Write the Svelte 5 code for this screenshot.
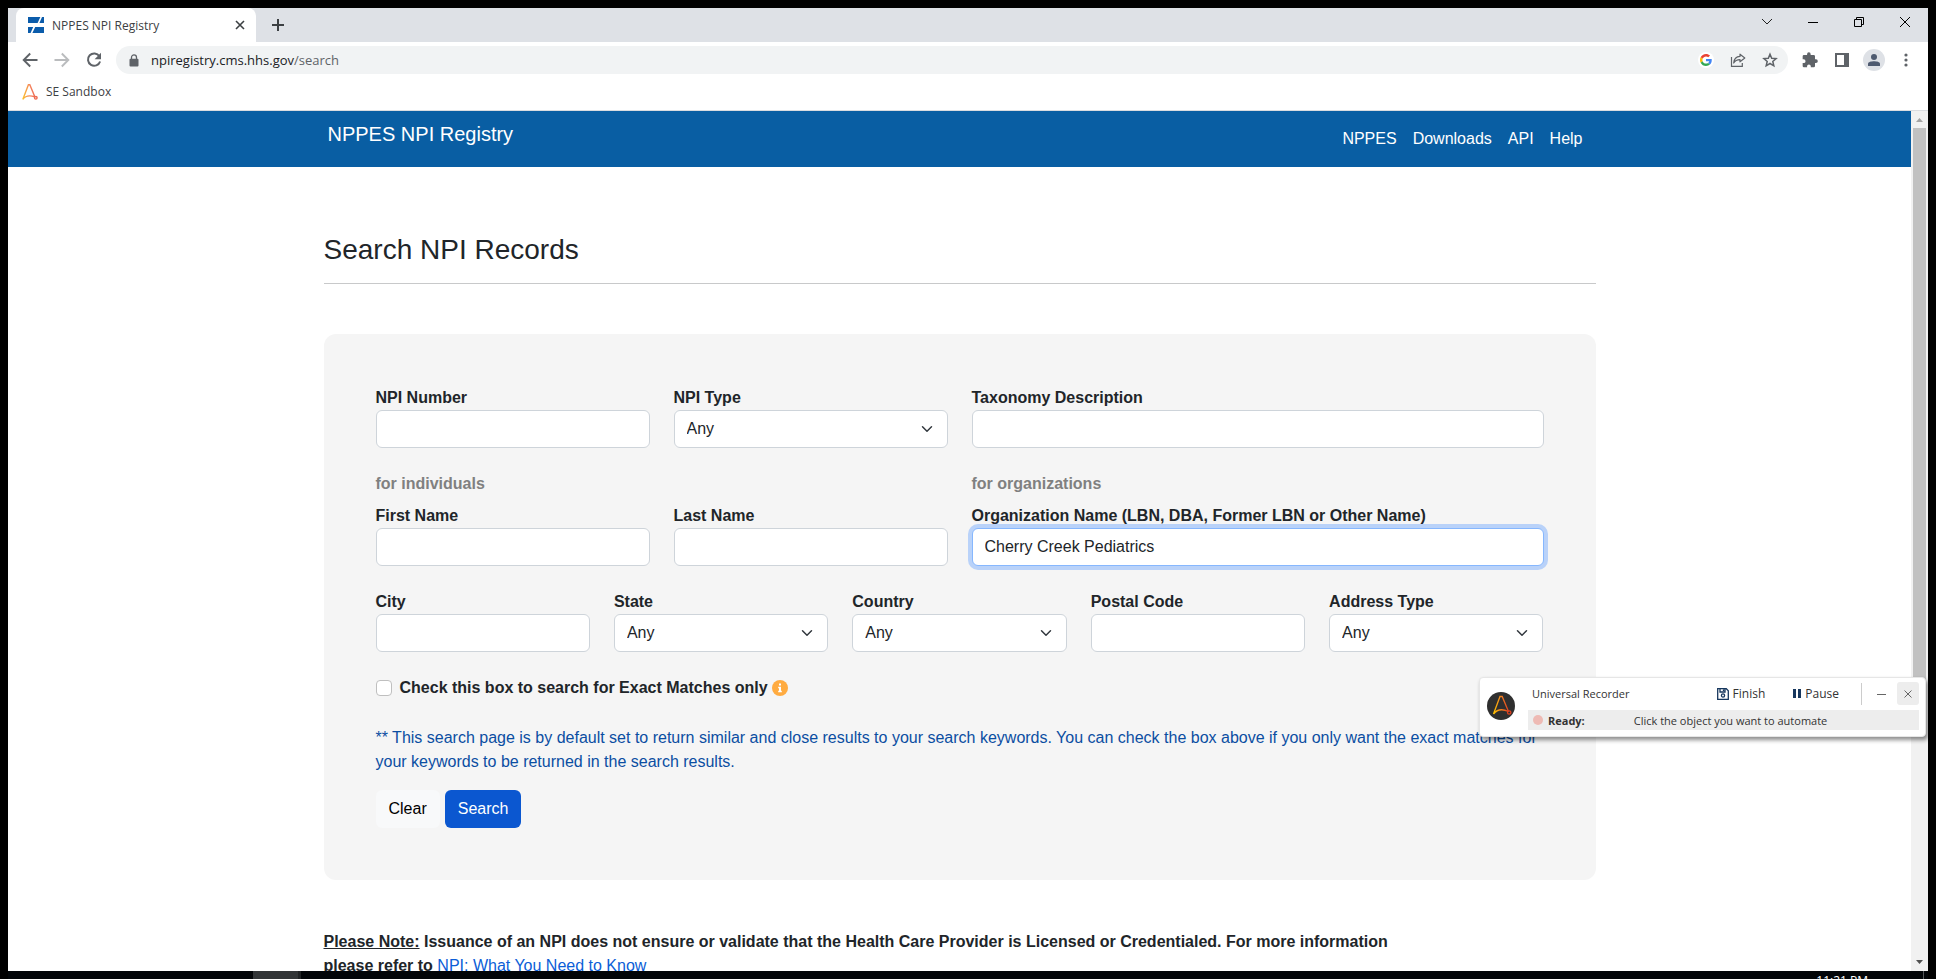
<script lang="ts">
  let organization = $state('Cherry Creek Pediatrics');
  let exact = $state(false);
</script>

{#snippet field(id: string, label: string, span: string)}
  <div class="field {span}">
    <label for={id}>{label}</label>
    <input {id} class="control" type="text" />
  </div>
{/snippet}

{#snippet picker(id: string, label: string, span: string)}
  <div class="field {span}">
    <label for={id}>{label}</label>
    <select {id} class="control">
      <option>Any</option>
    </select>
  </div>
{/snippet}

<div class="desktop">
  <div class="window">
    <div class="tabstrip">
      <div class="tab">
        <svg width="16" height="16" viewBox="0 0 16 16">
          <path fill="#0b5cab" d="M0 0h12.400L9.600 6H0zM14 0h2v6h-4.600zM0 10h5.200L2.600 16H0zM7.200 10H16v6H4.400z" />
        </svg>
        <span class="tab-title">NPPES NPI Registry</span>
        <button class="icon" aria-label="Close tab">
          <svg width="10" height="10" viewBox="0 0 10 10"><path d="M1 1l8 8M9 1l-8 8" stroke="#3c4043" stroke-width="1.600" /></svg>
        </button>
      </div>
      <button class="icon new-tab" aria-label="New tab">
        <svg width="12" height="12" viewBox="0 0 12 12"><path d="M6 0v12M0 6h12" stroke="#3c4043" stroke-width="2" /></svg>
      </button>
      <div class="window-buttons">
        <button class="icon" aria-label="Search tabs">
          <svg width="12" height="8" viewBox="0 0 12 8"><path d="M1 1l5 5 5-5" fill="none" stroke="#222" /></svg>
        </button>
        <button class="icon" aria-label="Minimize">
          <svg width="10" height="10" viewBox="0 0 10 10"><path d="M0 5.500h10" stroke="#000" /></svg>
        </button>
        <button class="icon" aria-label="Restore">
          <svg width="10" height="10" viewBox="0 0 10 10"><path d="M.5 2.500h7v7h-7zM2.500 2.500v-2h7v7h-2" fill="none" stroke="#000" /></svg>
        </button>
        <button class="icon" aria-label="Close window">
          <svg width="10" height="10" viewBox="0 0 10 10"><path d="M0 0l10 10M10 0L0 10" stroke="#000" /></svg>
        </button>
      </div>
    </div>

    <div class="toolbar">
      <button class="icon" aria-label="Back">
        <svg width="16" height="16" viewBox="0 0 16 16"><path d="M15.500 8H2M8.200 1.500L1.700 8l6.500 6.500" fill="none" stroke="#5f6368" stroke-width="1.900" /></svg>
      </button>
      <button class="icon" aria-label="Forward">
        <svg width="16" height="16" viewBox="0 0 16 16"><path d="M.5 8H14M7.800 1.500L14.300 8l-6.500 6.500" fill="none" stroke="#babcbe" stroke-width="1.900" /></svg>
      </button>
      <button class="icon" aria-label="Reload">
        <svg width="16" height="16" viewBox="0 0 16 16">
          <path d="M13.400 4.200A6.200 6.200 0 1 0 14.100 9.500" fill="none" stroke="#5f6368" stroke-width="2" />
          <path d="M15 .8v6.400H8.600z" fill="#5f6368" />
        </svg>
      </button>
      <div class="omnibox">
        <svg width="10" height="13" viewBox="0 0 10 13">
          <path d="M2.500 5.500V3.400a2.500 2.500 0 0 1 5 0v2.100" fill="none" stroke="#5f6368" stroke-width="1.300" />
          <rect x="0.500" y="4.700" width="9" height="7.800" rx="1" fill="#5f6368" />
        </svg>
        <span class="url">npiregistry.cms.hhs.gov<span class="path">/search</span></span>
        <button class="icon google" aria-label="Google">
          <svg width="12" height="12" viewBox="0 0 48 48">
            <path fill="#ea4335" d="M24 9.500c3.540 0 6.710 1.220 9.210 3.600l6.850-6.850C35.900 2.380 30.470 0 24 0 14.620 0 6.510 5.380 2.560 13.220l7.980 6.190C12.430 13.720 17.740 9.500 24 9.500z" />
            <path fill="#4285f4" d="M46.980 24.550c0-1.570-.15-3.090-.38-4.550H24v9.020h12.940c-.58 2.960-2.260 5.480-4.780 7.180l7.730 6c4.510-4.180 7.090-10.360 7.090-17.650z" />
            <path fill="#fbbc05" d="M10.530 28.590c-.48-1.450-.76-2.990-.76-4.590s.27-3.140.76-4.590l-7.980-6.190C.92 16.460 0 20.120 0 24c0 3.880.92 7.540 2.560 10.780l7.970-6.190z" />
            <path fill="#34a853" d="M24 48c6.480 0 11.930-2.130 15.890-5.810l-7.730-6c-2.150 1.450-4.920 2.300-8.160 2.300-6.260 0-11.570-4.220-13.470-9.910l-7.980 6.190C6.510 42.620 14.620 48 24 48z" />
          </svg>
        </button>
        <button class="icon" aria-label="Share">
          <svg width="16" height="16" viewBox="0 0 16 16" fill="none" stroke="#5f6368" stroke-width="1.200">
            <path d="M1.500 5v9.400h10.800V11" />
            <path d="M10 2.200L14.800 6 10 9.800V7.600C7 7.600 5 8.600 3.700 11 4 7.200 6.500 4.600 10 4.400z" stroke-linejoin="round" />
          </svg>
        </button>
        <button class="icon" aria-label="Bookmark">
          <svg width="16" height="16" viewBox="0 0 16 16"><path d="M8 2.200l1.700 4 4.400.4-3.300 2.900 1 4.300L8 11.500l-3.800 2.300 1-4.300-3.300-2.900 4.400-.4z" fill="none" stroke="#5f6368" stroke-width="1.500" /></svg>
        </button>
      </div>
      <button class="icon" aria-label="Extensions">
        <svg width="16" height="16" viewBox="0 0 24 24"><path fill="#5f6368" d="M21 11h-1.500V6.500a2 2 0 0 0-2-2H13V3.200a2.700 2.700 0 0 0-5.400 0v1.300H3a2 2 0 0 0-2 2V11h1.500a2.800 2.800 0 0 1 0 5.600H1V21a2 2 0 0 0 2 2h4.600v-1.500a2.800 2.800 0 0 1 5.600 0V23h4.300a2 2 0 0 0 2-2v-4.600H21A2.700 2.700 0 0 0 21 11z" /></svg>
      </button>
      <button class="icon" aria-label="Side panel">
        <svg width="14" height="14" viewBox="0 0 14 14"><path fill="#5f6368" fill-rule="evenodd" d="M0 0h14v14H0zM2 2h7v10H2z" /></svg>
      </button>
      <button class="icon profile" aria-label="Profile">
        <svg width="12" height="12" viewBox="0 0 12 12" fill="#4e5a70"><circle cx="6" cy="3" r="3" /><path d="M0 12V9.800C0 8 3.500 7.300 6 7.300S12 8 12 9.800V12z" /></svg>
      </button>
      <button class="icon" aria-label="Menu">
        <svg width="4" height="14" viewBox="0 0 4 14" fill="#5f6368"><circle cx="2" cy="2" r="1.600" /><circle cx="2" cy="7" r="1.600" /><circle cx="2" cy="12" r="1.600" /></svg>
      </button>
    </div>

    <div class="bookmarks">
      <svg width="16" height="16" viewBox="0 0 16 16" fill="none" stroke-width="1.400">
        <defs>
          <linearGradient id="flame" x1="0" x2="1"><stop offset="0" stop-color="#fbc02d" /><stop offset="0.600" stop-color="#f4845f" /><stop offset="1" stop-color="#ee6a50" /></linearGradient>
        </defs>
        <path stroke="url(#flame)" d="M.8 15.400L6.400.8h1.400l5 12M.8 15.400c2.500-3.600 6-4.600 12-2.600" />
        <circle cx="13.800" cy="13.800" r="1.300" stroke="#ee6a50" />
      </svg>
      <a href="#sandbox">SE Sandbox</a>
    </div>

    <div class="viewport">
      <div class="page">
        <header>
          <div class="container nav">
            <a class="brand" href="#home">NPPES NPI Registry</a>
            <nav>
              <a href="#nppes">NPPES</a>
              <a href="#downloads">Downloads</a>
              <a href="#api">API</a>
              <a href="#help">Help</a>
            </nav>
          </div>
        </header>

        <main class="container">
          <h1>Search NPI Records</h1>

          <form class="card">
            <div class="grid quarters">
              {@render field('number', 'NPI Number', '')}
              {@render picker('type', 'NPI Type', '')}
              {@render field('taxonomy', 'Taxonomy Description', 'wide')}
            </div>

            <div class="grid quarters">
              <p class="group wide">for individuals</p>
              <p class="group wide">for organizations</p>
              {@render field('first', 'First Name', '')}
              {@render field('last', 'Last Name', '')}
              <div class="field wide">
                <label for="organization">Organization Name (LBN, DBA, Former LBN or Other Name)</label>
                <input id="organization" class="control active" type="text" bind:value={organization} />
              </div>
            </div>

            <div class="grid fifths">
              {@render field('city', 'City', '')}
              {@render picker('state', 'State', '')}
              {@render picker('country', 'Country', '')}
              {@render field('postal', 'Postal Code', '')}
              {@render picker('address', 'Address Type', '')}
            </div>

            <div class="exact">
              <input id="exact" type="checkbox" bind:checked={exact} />
              <label for="exact">Check this box to search for Exact Matches only</label>
              <svg width="16" height="16" viewBox="0 0 16 16">
                <circle cx="8" cy="8" r="8" fill="#ffab40" />
                <path fill="#fff" d="M7 3.500h2v2H7zM6.200 6.800H9v4h.8v1.500H6.200v-1.500H7V8.200h-.8z" />
              </svg>
            </div>

            <p class="hint">** This search page is by default set to return similar and close results to your search keywords. You can check the box above if you only want the exact matches for your keywords to be returned in the search results.</p>

            <div class="actions">
              <button type="reset" class="btn clear">Clear</button>
              <button type="button" class="btn search">Search</button>
            </div>
          </form>

          <p class="note"><u>Please Note:</u> Issuance of an NPI does not ensure or validate that the Health Care Provider is Licensed or Credentialed. For more information please refer to <a href="#know">NPI: What You Need to Know</a></p>
        </main>
      </div>

      <div class="scrollbar">
        <svg width="17" height="17" viewBox="0 0 17 17"><path d="M5 11l3.500-4 3.500 4z" fill="#a3a3a3" /></svg>
        <div class="thumb"></div>
        <svg width="17" height="17" viewBox="0 0 17 17"><path d="M5 6l3.500 4L12 6z" fill="#505050" /></svg>
      </div>
    </div>
  </div>

  <div class="taskbar">
    <span class="task"></span>
    <span class="clock">11:21 PM</span>
    <span class="peek"></span>
  </div>

  <section class="recorder">
    <svg class="logo" width="28" height="28" viewBox="0 0 28 28" fill="none" stroke-width="1.300">
      <defs>
        <linearGradient id="ember" x1="0" x2="1"><stop offset="0" stop-color="#ffc400" /><stop offset="0.500" stop-color="#f58220" /><stop offset="1" stop-color="#e0401f" /></linearGradient>
      </defs>
      <circle cx="14" cy="14" r="14" fill="#2f2f2f" />
      <path stroke="url(#ember)" d="M6.500 22L13 4.500h2.200l6.300 15M6.500 22c3.500-4.500 8.500-5.500 15-2.500" />
      <circle cx="22.200" cy="20.500" r="1.700" stroke="#e0401f" />
    </svg>
    <div class="recorder-body">
      <div class="recorder-top">
        <span class="recorder-title">Universal Recorder</span>
        <button class="text-button">
          <svg width="12" height="12" viewBox="0 0 12 12" fill="none" stroke="#17375e" stroke-width="1.300"><path d="M.7.7h8.600l2 2v8.600H.7zM3 .7v3.300h5V.7M6.500 1.500v1.600" /><circle cx="6" cy="7.500" r="1.600" /></svg>
          Finish
        </button>
        <button class="text-button">
          <svg width="8" height="9" viewBox="0 0 8 9"><path d="M0 0h3v9H0zM5 0h3v9H5z" fill="#17375e" /></svg>
          Pause
        </button>
        <span class="divider"></span>
        <button class="icon mini" aria-label="Minimize recorder">
          <svg width="10" height="10" viewBox="0 0 10 10"><path d="M1 5.500h9" stroke="#666" /></svg>
        </button>
        <button class="icon mini shaded" aria-label="Close recorder">
          <svg width="8" height="8" viewBox="0 0 8 8"><path d="M.5.5l7 7M7.500.5l-7 7" stroke="#666" /></svg>
        </button>
      </div>
      <div class="status">
        <span class="dot"></span>
        <strong>Ready:</strong>
        <span class="message">Click the object you want to automate</span>
      </div>
    </div>
  </section>
</div>

<style>
  :global(body) {
    margin: 0;
    background: #000;
  }
  * {
    box-sizing: border-box;
  }
  svg {
    display: block;
    flex: none;
  }
  p,
  h1 {
    margin: 0;
  }
  a {
    text-decoration: none;
  }
  .desktop {
    height: 100vh;
    padding: 8px 8px 0;
    display: flex;
    flex-direction: column;
    background: #000;
    overflow: hidden;
    font-family: 'Open Sans', sans-serif;
    font-size: 12px;
    color: #3c4043;
  }
  .window {
    flex: 1;
    min-height: 0;
    display: flex;
    flex-direction: column;
    background: #fff;
  }
  .icon {
    border: 0;
    padding: 0;
    background: none;
    display: flex;
    align-items: center;
    justify-content: center;
    width: 16px;
    height: 24px;
  }

  /* Browser chrome */
  .tabstrip {
    flex: none;
    height: 34px;
    display: flex;
    align-items: center;
    background: #dee1e6;
    padding-left: 8px;
  }
  .tab {
    width: 240px;
    height: 34px;
    display: flex;
    align-items: center;
    gap: 8px;
    padding: 0 8px 0 12px;
    background: #fff;
    border-radius: 8px 8px 0 0;
  }
  .tab-title {
    flex: 1;
  }
  .new-tab {
    margin-left: 14px;
  }
  .window-buttons {
    margin-left: auto;
    display: flex;
    align-items: center;
    gap: 30px;
    padding: 0 15px 6px 0;
  }
  .toolbar {
    flex: none;
    height: 36px;
    display: flex;
    align-items: center;
    gap: 16px;
    padding: 0 14px;
  }
  .omnibox {
    flex: 1;
    height: 28px;
    margin: 0 -2px;
    display: flex;
    align-items: center;
    gap: 16px;
    padding: 0 10px 0 13px;
    border-radius: 14px;
    background: #f1f3f4;
    font-size: 13px;
  }
  .url {
    flex: 1;
    margin-left: -4px;
    color: #202124;
  }
  .path {
    color: #5f6368;
  }
  .google {
    height: 16px;
    border-radius: 8px;
    background: #fff;
  }
  .profile {
    width: 22px;
    height: 22px;
    margin: 0 -3px;
    border-radius: 11px;
    background: #dee1e6;
  }
  .bookmarks {
    flex: none;
    height: 33px;
    display: flex;
    align-items: center;
    gap: 8px;
    padding: 0 14px 5px;
    border-bottom: 1px solid #dadce0;
  }
  .bookmarks a {
    color: #3c4043;
  }

  /* Web page */
  .viewport {
    flex: 1;
    min-height: 0;
    display: flex;
  }
  .page {
    flex: 1;
    overflow: hidden;
    font-family: 'Liberation Sans', Arial, sans-serif;
    font-size: 16px;
    line-height: 24px;
    color: #212529;
  }
  .container {
    max-width: 1320px;
    margin: 0 auto;
    padding: 0 24px;
  }
  header {
    background: #095ea3;
  }
  .nav {
    display: flex;
    justify-content: space-between;
    height: 56px;
    padding: 8px 37px 0 28px;
  }
  .nav a {
    color: #fff;
  }
  .brand {
    font-size: 20px;
    line-height: 30px;
  }
  nav {
    display: flex;
    gap: 16px;
    padding-top: 8px;
  }
  h1 {
    padding: 66px 0 16px;
    border-bottom: 1px solid #c8c9ca;
    font-size: 28px;
    line-height: 34px;
    font-weight: 400;
  }
  .card {
    margin-top: 50px;
    padding: 52px;
    border-radius: 12px;
    background: #f5f5f5;
  }
  .grid {
    display: grid;
    column-gap: 24px;
    margin-bottom: 24px;
  }
  .quarters {
    grid-template-columns: repeat(4, 1fr);
  }
  .fifths {
    grid-template-columns: repeat(5, 1fr);
  }
  .wide {
    grid-column: span 2;
  }
  .field {
    display: flex;
    flex-direction: column;
    min-width: 0;
  }
  .field label,
  .exact label,
  .group,
  .note {
    font-weight: 700;
  }
  .group {
    padding-bottom: 8px;
    color: #808080;
  }
  .control {
    width: 100%;
    height: 38px;
    padding: 0 12px;
    border: 1px solid #ced4da;
    border-radius: 6px;
    background-color: #fff;
    font: inherit;
    color: #212529;
  }
  select.control {
    appearance: none;
    background-image: url("data:image/svg+xml,%3csvg xmlns='http://www.w3.org/2000/svg' viewBox='0 0 16 16'%3e%3cpath fill='none' stroke='%23343a40' stroke-linecap='round' stroke-linejoin='round' stroke-width='2' d='m2 5 6 6 6-6'/%3e%3c/svg%3e");
    background-repeat: no-repeat;
    background-position: right 12px center;
    background-size: 16px 12px;
  }
  .active {
    border-color: #86b7fe;
    box-shadow: 0 0 0 4px #b9d2f9;
    outline: 0;
  }
  .exact {
    display: flex;
    align-items: center;
    gap: 8px;
  }
  .exact input {
    appearance: none;
    width: 16px;
    height: 16px;
    margin: 0;
    border: 1px solid #bfbfbf;
    border-radius: 4px;
    background: #fff;
  }
  .exact svg {
    margin-left: -4px;
  }
  .hint {
    padding: 26px 0 16px;
    color: #0b4ea2;
  }
  .actions {
    display: flex;
    gap: 5px;
  }
  .btn {
    height: 38px;
    padding: 0 13px;
    border: 0;
    border-radius: 6px;
    font: inherit;
  }
  .clear {
    background: #f8f9fa;
    color: #000;
  }
  .search {
    background: #0b57d0;
    color: #fff;
  }
  .note {
    max-width: 1100px;
    padding-top: 50px;
  }
  .note a {
    font-weight: 400;
    color: #0b5ed7;
  }
  .scrollbar {
    flex: none;
    width: 17px;
    display: flex;
    flex-direction: column;
    justify-content: space-between;
    background: #f1f1f1;
  }
  .thumb {
    height: 70%;
    margin: 0 2px auto;
    background: #c1c1c1;
  }

  /* Desktop taskbar, mostly below the screen edge */
  .taskbar {
    flex: none;
    height: 8px;
    display: flex;
    background: #020508;
    overflow: hidden;
  }
  .task {
    width: 48px;
    margin-left: 245px;
    background: #323537;
    border-right: 3px solid #202325;
  }
  .clock {
    margin-left: auto;
    padding: 2px 55px 0 0;
    line-height: 16px;
    color: #fff;
  }
  .peek {
    width: 5px;
    border-left: 1px solid #55585a;
  }

  /* Floating recorder panel */
  .recorder {
    position: absolute;
    right: 10px;
    top: 677px;
    width: 447px;
    height: 60px;
    display: flex;
    align-items: center;
    gap: 13px;
    padding: 4px 6px 6px 7px;
    border: 1px solid #e6e6e6;
    border-radius: 4px;
    background: #fff;
    box-shadow: 2px 3px 4px rgba(0, 0, 0, 0.45);
    font-size: 11px;
    color: #333;
  }
  .recorder-body {
    flex: 1;
  }
  .recorder-top {
    display: flex;
    align-items: center;
    padding-bottom: 5px;
    padding-left: 4px;
  }
  .recorder-title {
    flex: 1;
  }
  .text-button {
    display: flex;
    align-items: center;
    gap: 4px;
    margin-right: 28px;
    border: 0;
    padding: 0;
    background: none;
    font: inherit;
    font-size: 12px;
    color: #333;
  }
  .text-button + .divider {
    margin-left: -6px;
  }
  .divider {
    width: 1px;
    height: 22px;
    margin-right: 8px;
    background: #ccc;
  }
  .mini {
    width: 22px;
    height: 23px;
    border-radius: 3px;
  }
  .shaded {
    margin-left: 5px;
    background: #ededed;
  }
  .status {
    display: flex;
    align-items: center;
    height: 20px;
    padding: 0 5px;
    background: #ededed;
  }
  .dot {
    width: 10px;
    height: 10px;
    margin-right: 5px;
    border-radius: 5px;
    background: #eebab4;
  }
  .message {
    margin-left: 49px;
  }
</style>
